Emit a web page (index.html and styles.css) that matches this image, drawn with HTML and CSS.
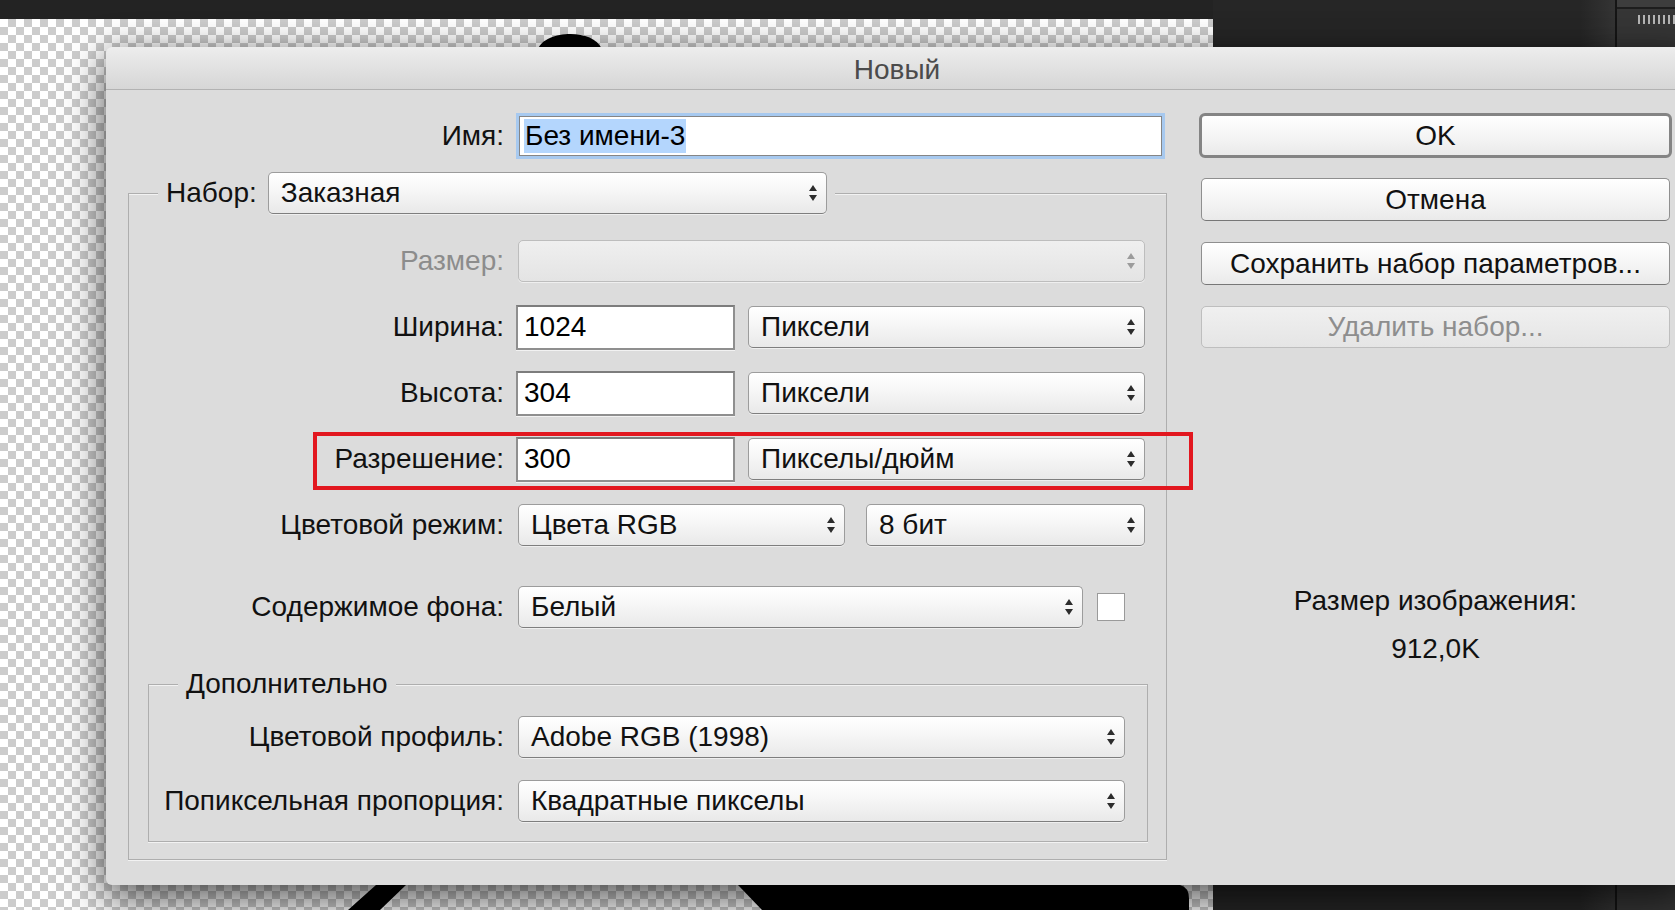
FILE: index.html
```html
<!DOCTYPE html>
<html lang="ru">
<head>
<meta charset="utf-8">
<title>Новый</title>
<link rel="stylesheet" href="styles.css">
</head>
<body>
<div class="desktop">
  <div class="doc">
    <div class="doc-top"></div>
    <div class="canvas">
      <svg class="art" width="1213" height="891" viewBox="0 0 1213 891">
        <path d="M538 30 C 544 12, 592 8, 602 30 Z" fill="#000"/>
        <polygon points="376,866 406,866 380,891 348,891" fill="#000"/>
        <path d="M738 866 L1180 866 Q1189 868 1189 880 L1189 891 L762 891 Z" fill="#000"/>
      </svg>
    </div>
  </div>
  <div class="dark-fill"></div>
  <div class="stripe"></div>
  <div class="panel">
    <div class="panel-top"></div>
    <div class="panel-ticks"></div>
  </div>

  <div class="dialog">
    <div class="titlebar">Новый</div>
    <div class="dialog-body">
      <div class="main">
        <div class="row name-row">
          <span class="lbl">Имя:</span>
          <div class="input focus"><span class="hl">Без имени-3</span></div>
        </div>

        <fieldset class="group">
          <legend class="legend">
            <div class="legend-inner">
              <span class="legend-lbl">Набор:</span>
              <div class="select w-preset"><span>Заказная</span>
                <svg class="arrows" width="10" height="18" viewBox="0 0 10 18"><path d="M1 7 L5 1 L9 7 Z M1 11 L5 17 L9 11 Z"/></svg>
              </div>
            </div>
          </legend>
          <div class="rows">
            <div class="row">
              <span class="lbl dim">Размер:</span>
              <div class="select disabled w-size">
                <svg class="arrows" width="10" height="18" viewBox="0 0 10 18"><path d="M1 7 L5 1 L9 7 Z M1 11 L5 17 L9 11 Z"/></svg>
              </div>
            </div>
            <div class="row">
              <span class="lbl">Ширина:</span>
              <div class="input w-num">1024</div>
              <div class="select w-unit"><span>Пиксели</span>
                <svg class="arrows" width="10" height="18" viewBox="0 0 10 18"><path d="M1 7 L5 1 L9 7 Z M1 11 L5 17 L9 11 Z"/></svg>
              </div>
            </div>
            <div class="row">
              <span class="lbl">Высота:</span>
              <div class="input w-num">304</div>
              <div class="select w-unit"><span>Пиксели</span>
                <svg class="arrows" width="10" height="18" viewBox="0 0 10 18"><path d="M1 7 L5 1 L9 7 Z M1 11 L5 17 L9 11 Z"/></svg>
              </div>
            </div>
            <div class="row">
              <span class="lbl">Разрешение:</span>
              <div class="input w-num">300</div>
              <div class="select w-unit"><span>Пикселы/дюйм</span>
                <svg class="arrows" width="10" height="18" viewBox="0 0 10 18"><path d="M1 7 L5 1 L9 7 Z M1 11 L5 17 L9 11 Z"/></svg>
              </div>
            </div>
            <div class="row">
              <span class="lbl">Цветовой режим:</span>
              <div class="select w-mode"><span>Цвета RGB</span>
                <svg class="arrows" width="10" height="18" viewBox="0 0 10 18"><path d="M1 7 L5 1 L9 7 Z M1 11 L5 17 L9 11 Z"/></svg>
              </div>
              <div class="select w-bits"><span>8 бит</span>
                <svg class="arrows" width="10" height="18" viewBox="0 0 10 18"><path d="M1 7 L5 1 L9 7 Z M1 11 L5 17 L9 11 Z"/></svg>
              </div>
            </div>
            <div class="row row-bg">
              <span class="lbl">Содержимое фона:</span>
              <div class="select w-bg"><span>Белый</span>
                <svg class="arrows" width="10" height="18" viewBox="0 0 10 18"><path d="M1 7 L5 1 L9 7 Z M1 11 L5 17 L9 11 Z"/></svg>
              </div>
              <div class="swatch"></div>
            </div>

            <fieldset class="group inner">
              <legend class="legend legend-text">Дополнительно</legend>
              <div class="rows inner-rows">
                <div class="row">
                  <span class="lbl">Цветовой профиль:</span>
                  <div class="select w-adv"><span>Adobe RGB (1998)</span>
                    <svg class="arrows" width="10" height="18" viewBox="0 0 10 18"><path d="M1 7 L5 1 L9 7 Z M1 11 L5 17 L9 11 Z"/></svg>
                  </div>
                </div>
                <div class="row">
                  <span class="lbl">Попиксельная пропорция:</span>
                  <div class="select w-adv"><span>Квадратные пикселы</span>
                    <svg class="arrows" width="10" height="18" viewBox="0 0 10 18"><path d="M1 7 L5 1 L9 7 Z M1 11 L5 17 L9 11 Z"/></svg>
                  </div>
                </div>
              </div>
            </fieldset>
          </div>
        </fieldset>
      </div>

      <div class="side">
        <div class="btn default">OK</div>
        <div class="btn btn-cancel">Отмена</div>
        <div class="btn btn-save">Сохранить набор параметров...</div>
        <div class="btn disabled btn-del">Удалить набор...</div>
        <div class="info">
          <div class="info-line">Размер изображения:</div>
          <div class="info-line">912,0K</div>
        </div>
      </div>
    </div>
    <div class="annotation"></div>
  </div>
</div>
</body>
</html>
```

FILE: styles.css
```css
html, body {
  margin: 0;
  padding: 0;
}

body {
  background: #262626;
  font-family: "Liberation Sans", Arial, sans-serif;
  color: #111;
}

.desktop {
  position: relative;
  width: 1675px;
  height: 910px;
  overflow: hidden;
  display: flex;
}

/* document / canvas */
.doc {
  width: 1213px;
  flex: none;
  display: flex;
  flex-direction: column;
}

.doc-top {
  height: 19px;
  background: #232323;
}

.canvas {
  flex: 1;
  background: repeating-conic-gradient(#cccccc 0 25%, #ffffff 0 50%) 0 0 / 16px 16px;
}

.art {
  display: block;
}

.dark-fill {
  flex: 1;
  background: #262626;
}

.stripe {
  width: 35px;
  flex: none;
  background: linear-gradient(90deg, #262626, #343434);
}

.panel {
  width: 58px;
  flex: none;
  border-left: 2px solid #151515;
  background: #363636;
}

.panel-top {
  height: 7px;
  background: #3d3d3d;
  border-bottom: 2px solid #1d1d1d;
}

.panel-ticks {
  margin: 6px 0 0 21px;
  height: 9px;
  background: repeating-linear-gradient(90deg, #b5b5b5 0 2px, transparent 2px 5px);
}

/* dialog window */
.dialog {
  position: absolute;
  left: 106px;
  top: 47px;
  width: 1582px;
  height: 838px;
  background: #dcdcdc;
  border-radius: 6px;
  box-shadow: 0 18px 45px rgba(0, 0, 0, 0.55), 0 0 28px rgba(0, 0, 0, 0.25);
  display: flex;
  flex-direction: column;
}

.titlebar {
  box-sizing: border-box;
  height: 43px;
  flex: none;
  padding-top: 4px;
  border-bottom: 1px solid #b2b2b2;
  border-radius: 6px 6px 0 0;
  background: linear-gradient(#ededed, #d6d6d6);
  display: flex;
  align-items: center;
  justify-content: center;
  font-size: 28px;
  color: #4b4b4b;
}

.dialog-body {
  display: flex;
  gap: 32px;
  padding: 23px 16px 0 22px;
}

.main {
  width: 1039px;
  flex: none;
}

.side {
  width: 473px;
  flex: none;
  display: flex;
  flex-direction: column;
}

/* rows */
.row {
  display: flex;
  align-items: center;
  height: 46px;
}

.lbl {
  flex: none;
  text-align: right;
  margin-right: 12px;
  font-size: 28px;
  color: #111;
  white-space: nowrap;
}

.name-row .lbl {
  width: 376px;
}

.group .lbl {
  width: 375px;
}

.group.inner .lbl {
  width: 355px;
}

.lbl.dim {
  color: #8c8c8c;
}

/* text inputs */
.input {
  box-sizing: border-box;
  height: 45px;
  background: #fff;
  border: 2px solid #8f8f8f;
  border-top-color: #7d7d7d;
  box-shadow: 0 1px 0 #f2f2f2;
  display: flex;
  align-items: center;
  padding-left: 6px;
  font-size: 28px;
  color: #000;
}

.input.focus {
  width: 643px;
  height: 40px;
  margin-left: 3px;
  border: 1px solid #858585;
  box-shadow: 0 0 0 3px #a7c9ef;
  padding-left: 4px;
}

.hl {
  background: #b4d6fd;
  line-height: 34px;
  padding: 0 1px;
}

.w-num {
  width: 219px;
}

/* pop-up selects */
.select {
  box-sizing: border-box;
  height: 42px;
  flex: none;
  border: 1px solid #9c9c9c;
  border-bottom-color: #7e7e7e;
  border-radius: 5px;
  background: linear-gradient(#ffffff, #f6f6f6 45%, #e9e9e9);
  box-shadow: 0 1px 0 rgba(255, 255, 255, 0.55);
  display: flex;
  align-items: center;
  padding: 0 8px 0 12px;
  font-size: 28px;
  color: #111;
  white-space: nowrap;
}

.arrows {
  margin-left: auto;
  flex: none;
  fill: #2d2d2d;
}

.select.disabled {
  background: linear-gradient(#efefef, #e4e4e4);
  border-color: #bdbdbd;
}

.select.disabled .arrows {
  fill: #9c9c9c;
}

.w-preset {
  width: 559px;
  margin-left: 11px;
}

.w-size {
  width: 627px;
  margin-left: 2px;
}

.w-unit {
  width: 397px;
  margin-left: 13px;
}

.w-mode {
  width: 327px;
  margin-left: 2px;
}

.w-bits {
  width: 279px;
  margin-left: 21px;
}

.w-bg {
  width: 565px;
  margin-left: 2px;
}

.w-adv {
  width: 607px;
  margin-left: 2px;
}

.swatch {
  width: 28px;
  height: 28px;
  box-sizing: border-box;
  margin-left: 14px;
  background: #fff;
  border: 1px solid #9a9a9a;
}

/* group boxes */
.group {
  margin: 13px 0 0;
  padding: 0;
  min-inline-size: 0;
  border: 1px solid #aeaeae;
  box-shadow: 0 1px 0 #f2f2f2, inset 0 1px 0 #f2f2f2;
}

.legend {
  padding: 0 8px;
  margin-left: 29px;
  background: #dcdcdc;
}

.legend-inner {
  display: flex;
  align-items: center;
  height: 42px;
}

.legend-lbl {
  font-size: 28px;
  color: #111;
}

.legend-text {
  font-size: 28px;
  line-height: 32px;
  color: #111;
}

.rows {
  display: flex;
  flex-direction: column;
  gap: 20px;
  padding: 24px 0 17px;
}

.row-bg {
  margin-top: 16px;
}

.group.inner {
  margin: 18px 18px 0 19px;
}

.inner-rows {
  gap: 18px;
  padding: 14px 0 17px;
}

/* buttons */
.btn {
  box-sizing: border-box;
  height: 43px;
  margin: 0 2px;
  border: 1px solid #8f8f8f;
  border-bottom-color: #777;
  border-radius: 5px;
  background: linear-gradient(#ffffff, #f4f4f4 55%, #eaeaea);
  display: flex;
  align-items: center;
  justify-content: center;
  font-size: 28px;
  color: #111;
  white-space: nowrap;
}

.btn.default {
  height: 45px;
  margin: 0;
  border: 3px solid #848484;
  border-radius: 6px;
}

.btn-cancel {
  margin-top: 20px;
}

.btn-save {
  margin-top: 21px;
}

.btn-del {
  margin-top: 21px;
  height: 42px;
}

.btn.disabled {
  color: #8e8e8e;
  border-color: #bebebe;
  background: linear-gradient(#f0f0f0, #e5e5e5);
}

.info {
  margin-top: 237px;
  display: flex;
  flex-direction: column;
  gap: 16px;
  text-align: center;
  font-size: 28px;
  color: #111;
}

.info-line {
  line-height: 32px;
}

/* red annotation rectangle drawn over the dialog */
.annotation {
  position: absolute;
  left: 207px;
  top: 385px;
  width: 880px;
  height: 58px;
  box-sizing: border-box;
  border: 4px solid #e2171f;
}
```
